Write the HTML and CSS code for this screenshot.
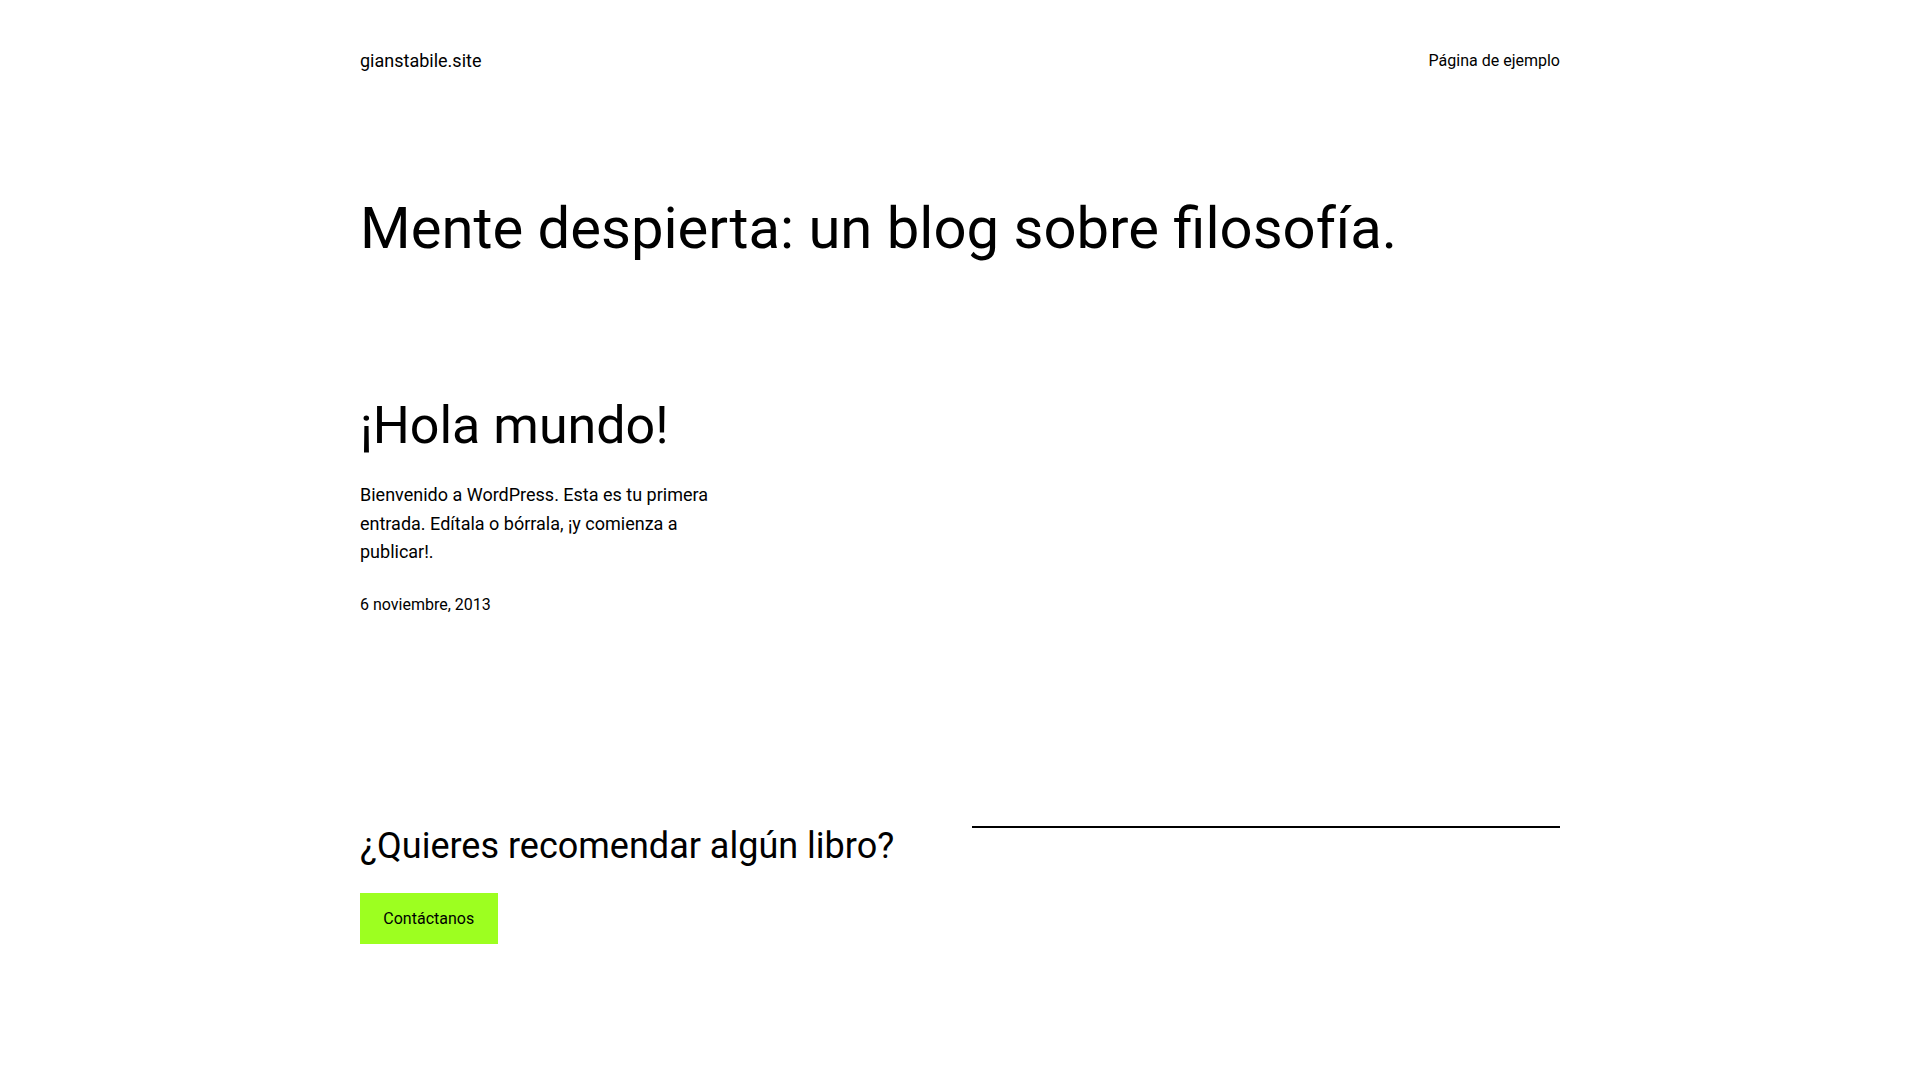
FILE: index.html
```html
<!DOCTYPE html>
<html lang="es">
<head>
<meta charset="utf-8">
<title>gianstabile.site</title>
<link rel="stylesheet" href="styles.css">
</head>
<body>
<div class="wrap">
  <header class="site-header">
    <a class="site-title" href="#">gianstabile.site</a>
    <nav class="site-nav"><a href="#">Página de ejemplo</a></nav>
  </header>
  <main>
    <h1 class="page-title">Mente despierta: un blog sobre filosofía.</h1>
    <div class="posts">
      <article class="post">
        <h2 class="post-title"><a href="#">¡Hola mundo!</a></h2>
        <p class="excerpt">Bienvenido a WordPress. Esta es tu primera entrada. Edítala o bórrala, ¡y comienza a publicar!.</p>
        <div class="post-date">6 noviembre, 2013</div>
      </article>
    </div>
    <section class="cta">
      <div class="cta-col">
        <h2 class="cta-title">¿Quieres recomendar algún libro?</h2>
        <a class="button" href="#">Contáctanos</a>
      </div>
      <div class="cta-col">
        <hr class="separator">
      </div>
    </section>
  </main>
</div>
</body>
</html>
```
FILE: styles.css
```css
html, body {
  margin: 0;
  padding: 0;
  background: #ffffff;
}
body {
  font-family: Roboto, "Liberation Sans", sans-serif;
  color: #000000;
  font-size: 18px;
  line-height: 1.6;
}
a {
  color: inherit;
  text-decoration: none;
}
.wrap {
  width: 1200px;
  margin: 0 auto;
}
.site-header {
  padding-top: 47px;
  display: flex;
  justify-content: space-between;
  align-items: center;
  line-height: 28.8px;
}
.site-title {
  font-size: 18px;
}
.site-nav {
  font-size: 16px;
}
.page-title {
  margin: 118px 0 0 0;
  font-size: 58px;
  font-weight: 400;
  line-height: 1.2;
}
.posts {
  display: grid;
  grid-template-columns: repeat(3, 1fr);
  gap: 24px;
  margin-top: 132px;
}
.post-title {
  margin: 0;
  font-size: 52px;
  font-weight: 400;
  line-height: 1.2;
}
.excerpt {
  margin: 23px 0 0 0;
}
.post-date {
  margin-top: 25px;
  font-size: 16px;
  line-height: 1.6;
}
.cta {
  display: grid;
  grid-template-columns: 1fr 1fr;
  gap: 24px;
  margin-top: 207px;
  padding-bottom: 120px;
}
.cta-title {
  margin: 0;
  font-size: 36px;
  font-weight: 400;
  line-height: 1.2;
}
.button {
  display: inline-block;
  margin-top: 25px;
  background: #9dff20;
  color: #000000;
  font-size: 16px;
  line-height: 1.6;
  padding: 12.67px 23.33px;
}
.separator {
  margin: 1px 0 0 0;
  border: 0;
  border-top: 2px solid #000000;
  height: 0;
}
```
